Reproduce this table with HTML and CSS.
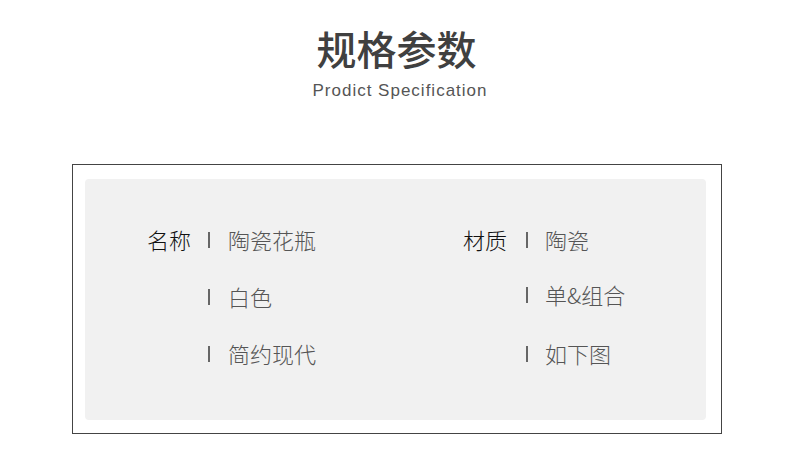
FILE: index.html
```html
<!DOCTYPE html>
<html lang="zh">
<head>
<meta charset="utf-8">
<link rel="stylesheet" href="styles.css">
</head>
<body>
<div class="page">
  <header class="head">
    <h1 class="title">规格参数</h1>
    <p class="subtitle">Prodict Specification</p>
  </header>
  <section class="frame">
    <div class="panel">
      <div class="col">
        <div class="row"><span class="label">名称</span><span class="sep"></span><span class="value">陶瓷花瓶</span></div>
        <div class="row"><span class="label"></span><span class="sep"></span><span class="value">白色</span></div>
        <div class="row"><span class="label"></span><span class="sep"></span><span class="value">简约现代</span></div>
      </div>
      <div class="col">
        <div class="row"><span class="label">材质</span><span class="sep"></span><span class="value">陶瓷</span></div>
        <div class="row r2"><span class="label"></span><span class="sep"></span><span class="value">单&amp;组合</span></div>
        <div class="row"><span class="label"></span><span class="sep"></span><span class="value">如下图</span></div>
      </div>
    </div>
  </section>
</div>
</body>
</html>
```
FILE: styles.css
```css
* { box-sizing: border-box; }
html, body { margin: 0; padding: 0; background: #fff; }
body {
  font-family: "Noto Sans CJK SC", "Liberation Sans", sans-serif;
  width: 790px;
  height: 452px;
  overflow: hidden;
}
.page { padding-top: 22px; }
.head { text-align: center; padding-left: 3px; }
.title {
  margin: 0;
  font-size: 40px;
  line-height: 52px;
  font-weight: 500;
  color: #404040;
  letter-spacing: 0;
}
.subtitle {
  margin: 7px 0 0;
  padding-left: 7px;
  font-family: "Liberation Sans", "Noto Sans CJK SC", sans-serif;
  font-size: 17px;
  line-height: 20px;
  letter-spacing: 1px;
  color: #555;
}
.frame {
  margin: 63px 0 0 72px;
  width: 650px;
  height: 270px;
  border: 1px solid #444;
  padding: 14px 15px 13px 12px;
}
.panel {
  height: 100%;
  background: #f1f1f1;
  border-radius: 4px;
  display: flex;
  padding: 31px 0 0 62px;
}
.col { display: flex; flex-direction: column; }
.col:first-child { width: 316px; }
.row {
  display: flex;
  align-items: center;
  height: 57px;
  font-size: 22px;
  font-weight: 300;
}
.label { width: 44px; color: #111; }
.sep {
  width: 2px;
  height: 16px;
  background: #666;
  margin: 3px 18px 0 17px;
}
.col:last-child .sep { margin: 3px 17px 0 19px; }
.value { color: #555; }
.r2 { margin-top: -2px; margin-bottom: 2px; }
```
